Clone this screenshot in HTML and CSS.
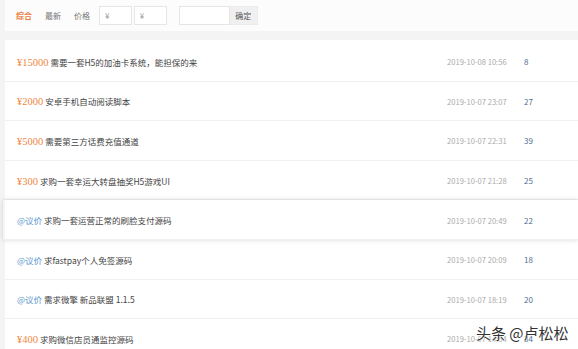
FILE: index.html
```html
<!DOCTYPE html>
<html lang="zh-CN">
  <head>
    <meta charset="UTF-8" />
    <meta name="viewport" content="width=device-width, initial-scale=1.0" />
    <title>需求列表</title>
    <link rel="stylesheet" href="styles.css">
  </head>
  <body>
    <div class="filter-bar">
      <a class="tab active">综合</a>
      <a class="tab">最新</a>
      <span class="tab">价格</span>
      <input type="text" class="price-input" placeholder="¥" />
      <span class="dash">-</span>
      <input type="text" class="price-input" placeholder="¥" />
      <div class="search">
        <input type="text" class="search-input" />
        <button class="search-btn">确定</button>
      </div>
    </div>

    <ul class="task-list">
      <li class="task">
        <div class="title"><span class="price">¥15000</span> 需要一套H5的加油卡系统，能担保的来</div>
        <div class="date">2019-10-08 10:56</div>
        <div class="count">8</div>
      </li>
      <li class="task">
        <div class="title"><span class="price">¥2000</span> 安卓手机自动阅读脚本</div>
        <div class="date">2019-10-07 23:07</div>
        <div class="count">27</div>
      </li>
      <li class="task">
        <div class="title"><span class="price">¥5000</span> 需要第三方话费充值通道</div>
        <div class="date">2019-10-07 22:31</div>
        <div class="count">39</div>
      </li>
      <li class="task">
        <div class="title"><span class="price">¥300</span> 求购一套幸运大转盘抽奖H5游戏UI</div>
        <div class="date">2019-10-07 21:28</div>
        <div class="count">25</div>
      </li>
      <li class="task hover">
        <div class="title"><span class="bargain">@议价</span> 求购一套运营正常的刷脸支付源码</div>
        <div class="date">2019-10-07 20:49</div>
        <div class="count">22</div>
      </li>
      <li class="task">
        <div class="title"><span class="bargain">@议价</span> 求fastpay个人免签源码</div>
        <div class="date">2019-10-07 20:09</div>
        <div class="count">18</div>
      </li>
      <li class="task">
        <div class="title"><span class="bargain">@议价</span> 需求微擎 新品联盟 1.1.5</div>
        <div class="date">2019-10-07 18:19</div>
        <div class="count">20</div>
      </li>
      <li class="task">
        <div class="title"><span class="price">¥400</span> 求购微信店员通监控源码</div>
        <div class="date">2019-10-07 14:54</div>
        <div class="count">34</div>
      </li>
    </ul>

    <div class="watermark">头条 @卢松松</div>
  </body>
</html>
```

FILE: styles.css
```css
body {
  font-family: 'Noto Sans CJK SC', 'Liberation Sans', sans-serif;
  background-color: #f4f4f4;
  margin: 0;
  padding-left: 5px;
  color: #444;
  overflow: hidden;
}

.filter-bar {
  display: flex;
  align-items: center;
  height: 31px;
  padding-left: 11px;
  background-color: #fcfcfc;
  font-size: 8px;
}

.tab {
  color: #777;
  margin-right: 13px;
  cursor: pointer;
}

.tab.active {
  color: #ee7d3b;
  font-weight: bold;
}

.price-input {
  width: 33px;
  height: 19px;
  box-sizing: border-box;
  border: 1px solid #e6e6e6;
  background-color: #fff;
  padding: 0 5px;
  font-size: 8px;
  font-family: inherit;
  margin: 0 0 0 -4px;
}

.price-input::placeholder {
  color: #999;
}

.dash {
  color: #666;
  margin: 0 1px 0 2px;
}

.search {
  display: flex;
  margin-left: 12px;
}

.search-input {
  width: 51px;
  height: 19px;
  box-sizing: border-box;
  border: 1px solid #e6e6e6;
  background-color: #fff;
  padding: 0 4px;
}

.search-btn {
  width: 28px;
  height: 19px;
  border: 1px solid #ebebeb;
  border-left: none;
  background-color: #f0f0f0;
  color: #555;
  font-size: 8px;
  font-family: inherit;
  padding: 0;
}

.task-list {
  list-style: none;
  margin: 9px 0 0;
  padding: 2px 0 0;
  background-color: #fff;
}

.task {
  display: flex;
  align-items: center;
  height: 39.6px;
  box-sizing: border-box;
  padding: 1px 0 0 12px;
  border-bottom: 1px solid #f0f0f0;
  font-size: 8.5px;
}

.task.hover {
  position: relative;
  margin-left: -2px;
  padding-left: 14px;
  box-shadow: 0 0 5px rgba(0, 0, 0, 0.15);
}

.title {
  width: 430px;
  color: #444;
}

.price {
  font-family: 'Liberation Serif', serif;
  font-size: 10.5px;
  color: #f0873f;
}

.bargain {
  color: #5b97cf;
}

.date {
  width: 77px;
  color: #aaa;
  font-size: 7.6px;
}

.count {
  color: #4d6f92;
  font-size: 8px;
}

.watermark {
  position: absolute;
  left: 476px;
  top: 322px;
  font-size: 15px;
  color: #333;
  text-shadow: 0 0 2px #fff, 0 0 2px #fff;
}
```
